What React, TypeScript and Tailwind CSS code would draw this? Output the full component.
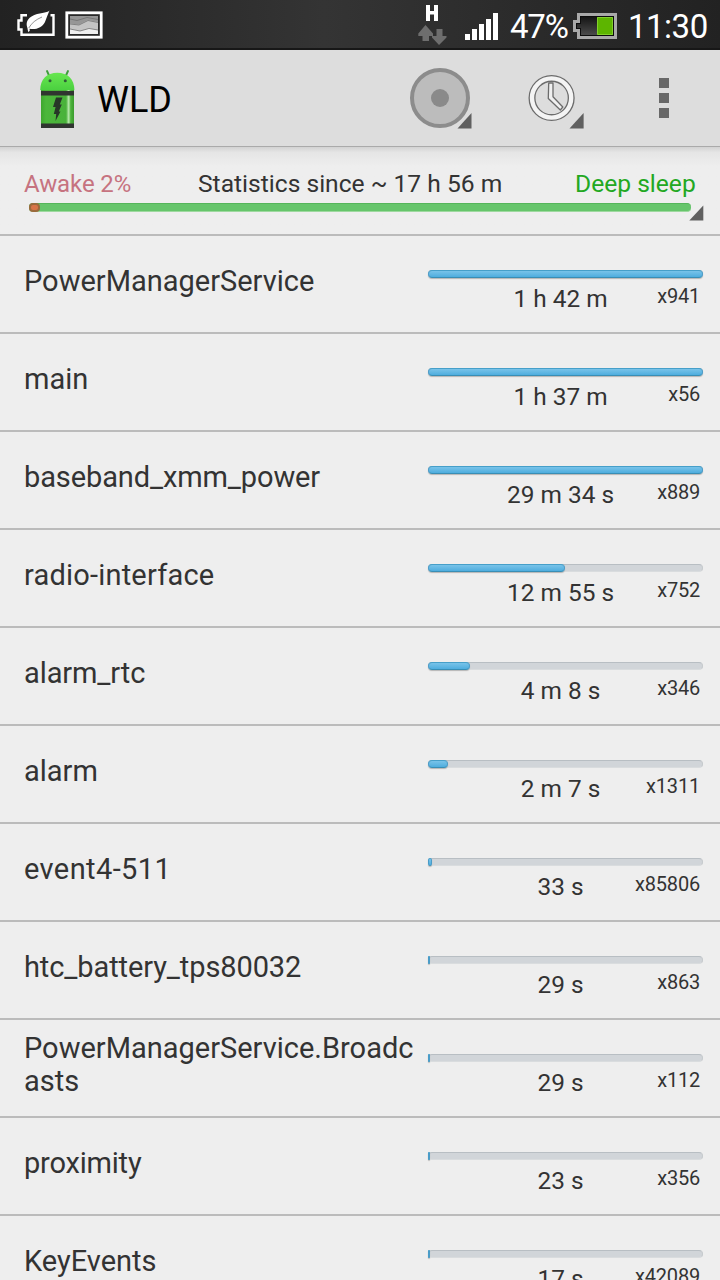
type Wakelock = { name: string; time: string; count: string; fill: number; tracking?: string };

const wakelocks: Wakelock[] = [
  { name: 'PowerManagerService', time: '1 h 42 m', count: 'x941', fill: 275 },
  { name: 'main', time: '1 h 37 m', count: 'x56', fill: 275 },
  { name: 'baseband_xmm_power', time: '29 m 34 s', count: 'x889', fill: 275, tracking: 'tracking-[-0.110px]' },
  { name: 'radio-interface', time: '12 m 55 s', count: 'x752', fill: 137, tracking: 'tracking-[0.200px]' },
  { name: 'alarm_rtc', time: '4 m 8 s', count: 'x346', fill: 42, tracking: 'tracking-[-0.100px]' },
  { name: 'alarm', time: '2 m 7 s', count: 'x1311', fill: 20 },
  { name: 'event4-511', time: '33 s', count: 'x85806', fill: 4, tracking: 'tracking-[0.400px]' },
  { name: 'htc_battery_tps80032', time: '29 s', count: 'x863', fill: 2, tracking: 'tracking-[-0.100px]' },
  { name: 'PowerManagerService.Broadcasts', time: '29 s', count: 'x112', fill: 2 },
  { name: 'proximity', time: '23 s', count: 'x356', fill: 2, tracking: 'tracking-[-0.200px]' },
  { name: 'KeyEvents', time: '17 s', count: 'x42089', fill: 2 },
];

function PowerSaverIcon() {
  return (
    <svg className="mt-[10px] h-[28px] w-[40px]" viewBox="0 0 40 28">
      <path d="M11 5.2H5.500V10.500H2.500V19.500H5.500V24.800H37.500V5.2H34.500" fill="none" stroke="#fff" strokeWidth="2.4" />
      <path
        d="M33.500 .5C31 3.500 23 2 15.500 6.500C10 10 10 14.500 11.500 18.300C11.700 20 12 21 12.500 22.200L13.800 20.500L13.500 18.800C20 20 26.500 17.500 29 12C30.500 8 31.500 5 33.500 .5Z"
        fill="#fff"
      />
      <path d="M12.800 18C15.500 13 20 9.500 26 7" fill="none" stroke="#777" strokeWidth=".8" />
    </svg>
  );
}

function PictureIcon() {
  return (
    <svg className="mt-[11px] ml-[9px] h-[28px] w-[38px]" viewBox="0 0 38 28">
      <rect x="1.800" y="1.800" width="34.400" height="24.400" fill="#292929" stroke="#fff" strokeWidth="2.800" />
      <rect x="5" y="5" width="28" height="18" fill="#efefef" />
      <path d="M5 5H33V19L24 17.500L15 20L5 18Z" fill="#c4c4c4" />
      <path d="M5 5H33V11L23 9L14 13.500L5 12.500Z" fill="#969696" />
      <path d="M5 8L12 9.500L22 6.500L33 8.500M5 13L14 14L23 9.500L33 11.500M5 18L15 20L24 17.500L33 19" fill="none" stroke="#707070" strokeWidth=".8" />
    </svg>
  );
}

function NetworkIcon() {
  return (
    <svg className="h-[50px] w-[30px]" viewBox="0 0 30 50">
      <path d="M8 5H12V11H16V5H20V21H16V14.500H12V21H8Z" fill="#fff" />
      <path d="M7.500 25L15 33.500V36H11V41H4.500V36H.300V33.500Z" fill="#6e6e6e" />
      <path d="M18.500 29H24.500V36H28.500V37.500L21 45L14 37.500V36H18.500Z" fill="#6e6e6e" />
    </svg>
  );
}

function SignalIcon() {
  return (
    <svg className="ml-[17px] h-[50px] w-[33px]" viewBox="0 0 33 50">
      <path d="M0 34H5V40H0ZM7 29H12V40H7ZM14 24H19V40H14ZM21 19H26V40H21ZM28 13H33V40H28Z" fill="#fff" />
    </svg>
  );
}

function BatteryIcon() {
  return (
    <svg className="ml-[5px] h-[50px] w-[44px]" viewBox="0 0 44 50">
      <defs>
        <linearGradient id="cell" x1="0" y1="0" x2="0" y2="1">
          <stop offset="0" stopColor="#151515" />
          <stop offset="1" stopColor="#4a4a4a" />
        </linearGradient>
      </defs>
      <path d="M4 13H44V39H4V32H0V20H4Z" fill="#a9a9a9" />
      <path d="M7 16H41V36H7V29H3V23H7Z" fill="#0c0c0c" />
      <path d="M8 17H40V35H8V28H4V24H8Z" fill="url(#cell)" />
      <rect x="24" y="17" width="16" height="18" fill="#5db500" />
      <path d="M24.500 17.500H39.500V34.500H24.500Z" fill="none" stroke="#83cf2c" strokeWidth="1" />
    </svg>
  );
}

function AndroidIcon() {
  return (
    <svg className="mt-px ml-[38px] h-[62px] w-[40px]" viewBox="0 0 40 62">
      <defs>
        <linearGradient id="head" x1="0" y1="0" x2="0" y2="1">
          <stop offset="0" stopColor="#68e750" />
          <stop offset="1" stopColor="#4bd040" />
        </linearGradient>
        <linearGradient id="can" x1="0" y1="0" x2="1" y2="0">
          <stop offset="0" stopColor="#3fa62f" />
          <stop offset=".15" stopColor="#4cb73b" />
          <stop offset=".76" stopColor="#49b23a" />
          <stop offset=".84" stopColor="#b9e9ad" />
          <stop offset=".9" stopColor="#4cb33b" />
          <stop offset="1" stopColor="#3a9c2d" />
        </linearGradient>
      </defs>
      <path d="M9 3L11.500 8.500M30 3L27.500 8.500" stroke="#3e9d3a" strokeWidth="1.900" strokeLinecap="round" />
      <path d="M2.200 22C2.200 11 9 4.700 19.300 4.700S36.400 11 36.400 22Z" fill="url(#head)" />
      <circle cx="12" cy="12.800" r="1.500" fill="#305c38" />
      <circle cx="27.300" cy="12.800" r="1.500" fill="#305c38" />
      <rect x="3" y="22" width="33" height="38" fill="url(#can)" />
      <rect x="3" y="23" width="33" height="4.500" fill="#303530" />
      <rect x="3" y="55.500" width="33" height="4.500" fill="#303530" />
      <path d="M18 29.500H24.500L21.800 36.500H23.800L20.800 43.500H22.500L17.500 53L18.200 46H15.800L17.600 39H15Z" fill="#273628" />
    </svg>
  );
}

function Corner() {
  return (
    <svg className="h-[16px] w-[15px]" viewBox="0 0 15 16">
      <path d="M14.300 .5V15.500H.3Z" fill="#606060" />
    </svg>
  );
}

function StatusBar() {
  return (
    <header className="flex h-[50px] shrink-0 items-start border-b-2 border-[#171717] bg-linear-to-r from-[#222] via-[#343434] via-45% to-[#222] pl-[16px] text-white">
      <PowerSaverIcon />
      <PictureIcon />
      <div className="ml-[315px] flex items-start">
        <NetworkIcon />
        <SignalIcon />
        <span className="ml-[12px] w-[58px] text-[33px] leading-[53px] tracking-[-1.200px] whitespace-nowrap">47%</span>
        <BatteryIcon />
        <span className="ml-[11px] text-[33px] leading-[53px] tracking-[-0.500px] whitespace-nowrap">11:30</span>
      </div>
    </header>
  );
}

function ActionBar() {
  return (
    <div className="flex h-[97px] shrink-0 items-center border-b border-[#aaa] bg-[#ddd]">
      <AndroidIcon />
      <h1 className="mt-[4px] ml-[19px] w-[310px] text-[36px] leading-[42px] text-black">WLD</h1>
      <svg className="h-[64px] w-[66px]" viewBox="0 0 66 64">
        <circle cx="33" cy="32" r="28" fill="#bcbcbc" stroke="#8c8c8c" strokeWidth="4" />
        <circle cx="33" cy="32" r="9" fill="#8a8a8a" />
        <path d="M64.500 47V62.500H50.500Z" fill="#606060" />
      </svg>
      <svg className="ml-[47px] h-[64px] w-[66px]" viewBox="0 0 66 64">
        <circle cx="31.600" cy="32" r="19.600" fill="none" stroke="#6c6c6c" strokeWidth="7" />
        <circle cx="31.600" cy="32" r="19.600" fill="none" stroke="#f4f4f4" strokeWidth="4.400" />
        <path d="M28.700 17H33V30.700L42.800 41L40.300 44L28.300 32.500Z" fill="#f0f0f0" stroke="#6c6c6c" strokeWidth="1.300" strokeLinejoin="round" />
        <path d="M63.600 47V62.500H49.500Z" fill="#606060" />
      </svg>
      <div className="ml-[73px] flex flex-col gap-[5px]">
        <i className="size-[10px] bg-[#686868]" />
        <i className="size-[10px] bg-[#686868]" />
        <i className="size-[10px] bg-[#686868]" />
      </div>
    </div>
  );
}

function Summary() {
  return (
    <section className="h-[89px] shrink-0 border-b-2 border-[#bbb] bg-linear-to-b from-[#d2d2d2] via-[#e5e5e5] via-6% to-[#eee] to-22% pt-[22px]">
      <div className="flex h-[30px] items-center pl-[24px] text-[24.600px] leading-[30px] whitespace-nowrap">
        <span className="w-[174px] text-[24px] tracking-[-0.100px] text-[#c67380]">Awake 2%</span>
        <span className="w-[377px] text-[#333]">Statistics since ~ 17 h 56 m</span>
        <span className="text-[#22a822]">Deep sleep</span>
      </div>
      <div className="flex pl-[29px]">
        <div className="mt-[4px] flex h-[9px] w-[662px] rounded-[4px] border-t border-b border-t-[#55b55a] border-b-[#9ed99f] bg-[#66c56b]">
          <i className="-mt-px h-[9px] w-[11px] rounded-[4px] border-2 border-[#9b6a3c] bg-[#d87548]" />
        </div>
        <div className="mt-[6px] -ml-[2px]"><Corner /></div>
      </div>
    </section>
  );
}

function Row({ item }: { item: Wakelock }) {
  const wraps = item.name.length > 26;
  return (
    <li className="flex h-[98px] shrink-0 border-b-2 border-[#bbb] pl-[24px]">
      <div className={`flex w-[404px] items-center pr-[12px] ${wraps ? 'pb-[7px]' : 'pb-[5px]'}`}>
        <span className={`w-full text-[29px] leading-[33px] break-all ${item.tracking ?? ''}`}>{item.name}</span>
      </div>
      <div className="w-[275px] pt-[34px]">
        <div className="h-[8px] rounded-[4px] border border-t-[#b8bec3] border-r-[#c5c9cc] border-b-[#d9dcde] border-l-[#c5c9cc] bg-[#d1d5d9]">
          <div
            className="-mt-px -ml-px h-[8px] rounded-[4px] border border-x-[#4a9cc8] border-t-[#469fc9] border-b-[#398eb5] bg-linear-to-b from-[#78c3e9] to-[#4eadde] shadow-[0_1px_1px_#b5b5b5]"
            style={{ width: item.fill }}
          />
        </div>
        <div className="grid whitespace-nowrap">
          <span className="col-start-1 row-start-1 mt-[6px] pr-[10px] text-center text-[24.400px] leading-[30px]">{item.time}</span>
          <span className="col-start-1 row-start-1 mt-[6px] pr-[3px] text-right text-[20px] leading-[24px] tracking-[-0.200px]">{item.count}</span>
        </div>
      </div>
    </li>
  );
}

export default function App() {
  return (
    <main className="flex h-[1280px] w-[720px] flex-col overflow-hidden bg-[#eee] font-['Roboto',sans-serif] text-[#333]">
      <StatusBar />
      <ActionBar />
      <Summary />
      <ul className="flex flex-col">
        {wakelocks.map((item) => (
          <Row key={item.name} item={item} />
        ))}
      </ul>
    </main>
  );
}
